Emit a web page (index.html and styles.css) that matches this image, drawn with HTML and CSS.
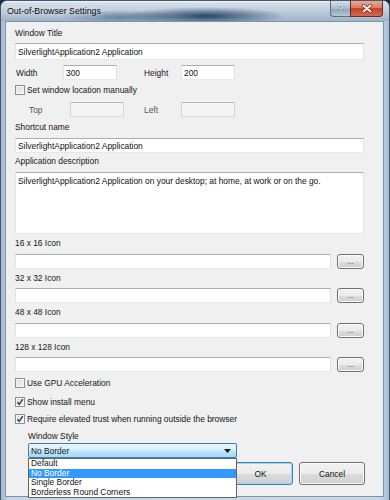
FILE: index.html
```html
<!DOCTYPE html>
<html lang="en">
<head>
  <meta charset="UTF-8" />
  <meta name="viewport" content="width=device-width, initial-scale=1.0" />
  <title>Out-of-Browser Settings</title>
  <link rel="stylesheet" href="styles.css">
</head>
<body>
  <div class="window">
    <div class="titlebar">
      <span class="title">Out-of-Browser Settings</span>
      <div class="caption-buttons">
        <span class="cap-btn help">?</span>
        <span class="cap-btn close">
          <svg width="12" height="9" viewBox="0 0 12 9">
            <path d="M2.5 1.5 L9.5 7.5 M9.5 1.5 L2.5 7.5" stroke="#7a2a1c" stroke-width="3.2" stroke-linecap="round" />
            <path d="M2.5 1.5 L9.5 7.5 M9.5 1.5 L2.5 7.5" stroke="#fff" stroke-width="1.8" stroke-linecap="round" />
          </svg>
        </span>
      </div>
    </div>

    <div class="client">
      <div class="lbl">Window Title</div>
      <input class="tb tb-title" type="text" value="SilverlightApplication2 Application" />

      <div class="row size-row">
        <span class="lbl lbl-width">Width</span>
        <input class="tb tb-num" type="text" value="300" />
        <span class="lbl lbl-height">Height</span>
        <input class="tb tb-num" type="text" value="200" />
      </div>

      <div class="chk chk-location">
        <span class="box"></span>
        <span class="lbl">Set window location manually</span>
      </div>

      <div class="row pos-row">
        <span class="lbl lbl-top">Top</span>
        <input class="tb tb-num" type="text" disabled />
        <span class="lbl lbl-left">Left</span>
        <input class="tb tb-num" type="text" disabled />
      </div>

      <div class="lbl lbl-shortcut">Shortcut name</div>
      <input class="tb tb-shortcut" type="text" value="SilverlightApplication2 Application" />

      <div class="lbl lbl-desc">Application description</div>
      <textarea class="tb desc">SilverlightApplication2 Application on your desktop; at home, at work or on the go.</textarea>

      <div class="lbl icon-lbl first">16 x 16 Icon</div>
      <div class="row icon-row r16">
        <input class="tb icon-path" type="text" />
        <button class="btn browse">...</button>
      </div>

      <div class="lbl icon-lbl">32 x 32 Icon</div>
      <div class="row icon-row r32">
        <input class="tb icon-path" type="text" />
        <button class="btn browse">...</button>
      </div>

      <div class="lbl icon-lbl">48 x 48 Icon</div>
      <div class="row icon-row r48">
        <input class="tb icon-path" type="text" />
        <button class="btn browse">...</button>
      </div>

      <div class="lbl icon-lbl">128 x 128 Icon</div>
      <div class="row icon-row r128">
        <input class="tb icon-path" type="text" />
        <button class="btn browse">...</button>
      </div>

      <div class="chk chk-gpu">
        <span class="box"></span>
        <span class="lbl">Use GPU Acceleration</span>
      </div>

      <div class="chk chk-install">
        <span class="box checked">
          <svg width="8" height="8" viewBox="0 0 8 8"><path d="M1.3 4.2 L3.2 6.3 L6.8 1.2" fill="none" stroke="#2b3a5c" stroke-width="1.4" /></svg>
        </span>
        <span class="lbl">Show install menu</span>
      </div>

      <div class="chk chk-trust">
        <span class="box checked">
          <svg width="8" height="8" viewBox="0 0 8 8"><path d="M1.3 4.2 L3.2 6.3 L6.8 1.2" fill="none" stroke="#2b3a5c" stroke-width="1.4" /></svg>
        </span>
        <span class="lbl">Require elevated trust when running outside the browser</span>
      </div>

      <div class="lbl lbl-style">Window Style</div>
      <div class="combo-wrap">
        <div class="combo">
          <span class="combo-text">No Border</span>
          <svg width="7" height="4" viewBox="0 0 7 4"><path d="M0 0 L7 0 L3.5 4 Z" fill="#1c1c1c" /></svg>
        </div>
        <ul class="combo-list">
          <li>Default</li>
          <li class="selected">No Border</li>
          <li>Single Border</li>
          <li>Borderless Round Corners</li>
        </ul>
      </div>

      <div class="dialog-buttons">
        <button class="btn btn-ok">OK</button>
        <button class="btn btn-cancel">Cancel</button>
      </div>
    </div>
  </div>
</body>
</html>
```

FILE: styles.css
```css
body {
  margin: 0;
  font-family: "Liberation Sans", Arial, sans-serif;
  background-color: #1f2f40;
}
.window {
  width: 390px;
  height: 500px;
  box-sizing: border-box;
  border: 1px solid #45576a;
  border-bottom: none;
  border-radius: 7px 7px 0 0;
  padding: 0 5px 3px 4px;
  display: flex;
  flex-direction: column;
  overflow: hidden;
  background: linear-gradient(to right, #a3b9d0, #c6d6e7 2%, #cad9ea 97%, #a9bed4);
}
.titlebar {
  height: 20px;
  display: flex;
  align-items: flex-start;
  padding-left: 1px;
  margin: 0 -5px 0 -4px;
  padding: 0 6px 0 5px;
  background:
    radial-gradient(ellipse 80px 9px at 205px 15px, rgba(25, 55, 90, 0.9), rgba(25, 55, 90, 0) 100%),
    radial-gradient(ellipse 60px 7px at 120px 16px, rgba(60, 90, 125, 0.6), rgba(60, 90, 125, 0) 100%),
    linear-gradient(#f2f5f8 0%, #d3dde7 12%, #bccbda 55%, #9fb4c9 100%);
}
.title {
  font-size: 8.8px;
  line-height: 20px;
  padding-left: 1px;
  color: #0b0b0b;
  text-shadow: 0 0 5px rgba(255, 255, 255, 0.9);
}
.caption-buttons {
  margin-left: auto;
  display: flex;
}
.cap-btn {
  height: 16px;
  box-sizing: border-box;
  display: flex;
  align-items: center;
  justify-content: center;
  border: 1px solid #5b6d80;
  border-top: none;
}
.help {
  width: 20px;
  border-radius: 0 0 0 4px;
  border-right: none;
  font-size: 10px;
  color: #f4f7fa;
  text-shadow: 0 0 2px #33465a;
  background: linear-gradient(#d9e3ec, #aabccd 50%, #8ea4b9 51%, #b5c6d6);
}
.close {
  width: 33px;
  border-radius: 0 0 4px 0;
  border-color: #6e2a20;
  background: linear-gradient(#e9a994, #d77a62 45%, #c7432b 50%, #d26a4e);
}
.client {
  flex: 1;
  background-color: #f0f0f0;
  border: 1px solid #7f92a8;
  padding: 6px 19px 0 9px;
  display: flex;
  flex-direction: column;
  font-size: 8.4px;
  color: #151515;
}
.lbl {
  height: 10px;
  line-height: 10px;
  font-size: 8.4px;
  white-space: nowrap;
}
.tb {
  box-sizing: border-box;
  height: 15px;
  margin: 0;
  padding: 0 2px;
  border: 1px solid;
  border-color: #abadb3 #dbdfe6 #e3e9ef #e2e3ea;
  background-color: #fff;
  font-family: "Liberation Sans", Arial, sans-serif;
  font-size: 8.4px;
  color: #111;
  outline: none;
}
.tb:disabled {
  background-color: #f4f4f4;
  border-color: #b8b8b8 #d4d4d4 #dadada #d4d4d4;
}
.tb-title {
  height: 17px;
  margin-top: 5px;
}
.row {
  display: flex;
  align-items: center;
}
.tb-num {
  width: 54px;
}
.size-row {
  margin-top: 5px;
  padding-left: 1px;
}
.lbl-width {
  width: 47px;
}
.lbl-height {
  width: 37px;
  margin-left: 27px;
}
.pos-row {
  margin-top: 7px;
  padding-left: 14px;
}
.lbl-top {
  width: 41px;
  color: #555;
}
.lbl-left {
  width: 37px;
  margin-left: 20px;
  color: #555;
}
.chk {
  display: flex;
  align-items: center;
  height: 10px;
}
.box {
  width: 10px;
  height: 10px;
  box-sizing: border-box;
  border: 1px solid #8f8f8f;
  background: linear-gradient(135deg, #d8d8d8, #f7f7f7);
  box-shadow: inset 0 0 0 1px #f4f4f4;
  margin-right: 2px;
  display: flex;
  align-items: center;
  justify-content: center;
}
.chk-location {
  margin-top: 5px;
}
.lbl-shortcut {
  margin-top: 5px;
}
.tb-shortcut {
  margin-top: 6px;
}
.lbl-desc {
  margin-top: 3px;
}
.desc {
  height: 62px;
  margin-top: 6px;
  padding: 3px 2px;
  resize: none;
  line-height: 11px;
}
.icon-lbl {
  margin-top: 4px;
}
.icon-row {
  margin-top: 5px;
  gap: 6px;
}
.icon-row.r16,
.icon-row.r48 {
  margin-top: 6px;
}
.icon-path {
  flex: 1;
}
.btn {
  box-sizing: border-box;
  margin: 0;
  padding: 0;
  border: 1px solid #707070;
  border-radius: 3px;
  background: linear-gradient(#f2f2f2 0%, #ebebeb 50%, #dddddd 51%, #cfcfcf 100%);
  box-shadow: inset 0 0 0 1px #fbfbfb;
  font-family: "Liberation Sans", Arial, sans-serif;
  font-size: 8.4px;
  color: #111;
}
.browse {
  width: 27px;
  height: 15px;
  font-size: 7px;
  line-height: 10px;
  color: #333;
}
.chk-gpu {
  margin-top: 6px;
}
.chk-install {
  margin-top: 9px;
}
.chk-trust {
  margin-top: 7px;
}
.lbl-style {
  margin-top: 7px;
  padding-left: 13px;
}
.combo-wrap {
  position: relative;
  margin: 2px 0 0 13px;
  width: 209px;
  z-index: 2;
}
.combo {
  height: 15px;
  box-sizing: border-box;
  border: 1px solid #3c7fb1;
  border-radius: 2px;
  background: linear-gradient(#eaf6fd 0%, #d9f0fc 48%, #bee6fd 52%, #a7d9f5 100%);
  display: flex;
  align-items: center;
  justify-content: space-between;
  padding: 0 5px 0 2px;
}
.combo-text {
  font-size: 8.4px;
}
.combo-list {
  position: absolute;
  top: 100%;
  left: 0;
  width: 209px;
  box-sizing: border-box;
  margin: 0;
  padding: 0;
  list-style: none;
  background-color: #fff;
  border: 1px solid #646464;
}
.combo-list li {
  height: 9.5px;
  line-height: 9.5px;
  padding-left: 2px;
  font-size: 8.4px;
  white-space: nowrap;
}
.combo-list li.selected {
  background-color: #3399ff;
  color: #fff;
}
.dialog-buttons {
  display: flex;
  justify-content: flex-end;
  gap: 6px;
  margin-top: 4px;
  margin-right: -1px;
}
.btn-ok,
.btn-cancel {
  height: 23px;
}
.btn-ok {
  width: 65px;
  border-color: #3c7fb1;
  box-shadow: inset 0 0 0 1px #9ad7f3;
}
.btn-cancel {
  width: 66px;
}
```
